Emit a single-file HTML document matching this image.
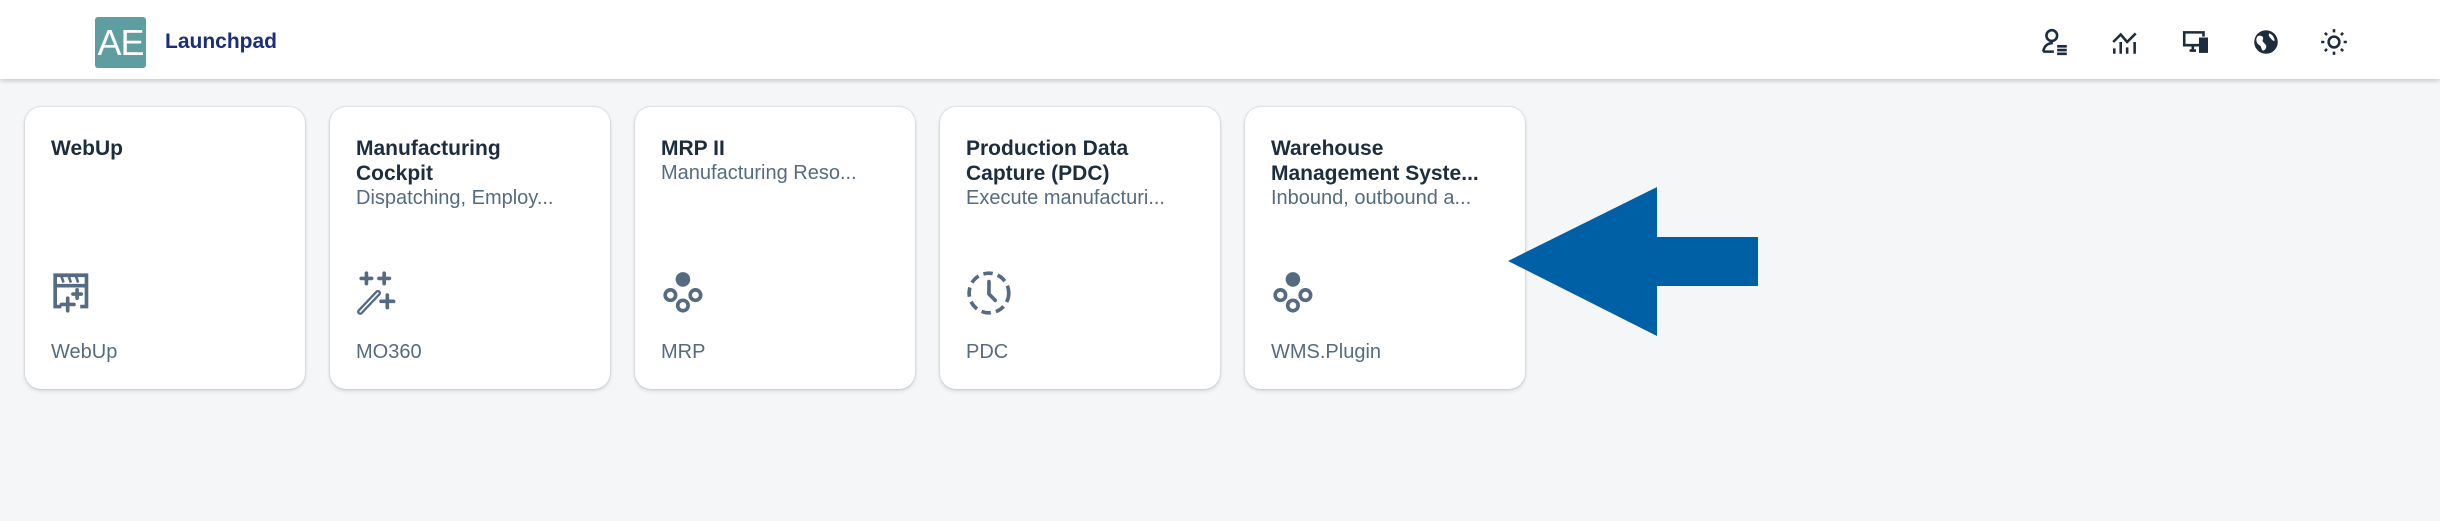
<!DOCTYPE html>
<html><head><meta charset="utf-8"><style>
*{margin:0;padding:0;box-sizing:border-box}
body{width:2440px;height:521px;background:#f5f6f7;font-family:"Liberation Sans",sans-serif;position:relative;overflow:hidden}
.hdr{position:absolute;left:0;top:0;width:2440px;height:79px;background:#fff;box-shadow:0 2px 4px rgba(0,0,0,.18)}
.logo{position:absolute;left:95px;top:17px;width:51px;height:51px;background:#5f9ea0;border-radius:3px;color:#fff;font-size:36px;line-height:51px;text-align:center;letter-spacing:-1px}
.lp{position:absolute;left:165px;top:30px;font-size:21px;font-weight:bold;color:#1a2e7a}
.hi{position:absolute;top:27px;width:30px;height:30px}
.card{position:absolute;top:107px;width:280px;height:282px;background:#fff;border-radius:16px;box-shadow:0 0 2px rgba(0,0,0,.2),0 2px 4px rgba(0,0,0,.12);padding:29px 26px}
.t{font-size:21px;font-weight:bold;color:#1d2d3e;line-height:25px;white-space:nowrap;overflow:hidden;text-overflow:ellipsis}
.s{font-size:20px;color:#556b82;line-height:25px;white-space:nowrap;overflow:hidden;text-overflow:ellipsis}
.ic{position:absolute;left:26px;top:162px;width:48px;height:48px}
.f{position:absolute;left:26px;top:234px;font-size:20px;color:#556b82}
</style></head><body>
<div class="hdr">
<div class="logo">AE</div><div class="lp">Launchpad</div>
<svg class="hi" style="left:2040px" viewBox="0 0 28 28" fill="none" stroke="#1d2d3e" stroke-width="2.4"><circle cx="11" cy="8" r="5"/><path d="M3 23c1-6 5-8 9-8"/><path d="M3 23h10M16 18h9M16 21.5h9M16 25h9"/></svg>
<svg class="hi" style="left:2110px" viewBox="0 0 28 28" fill="none" stroke="#1d2d3e" stroke-width="2.4"><path d="M3 14l7-7 6 7 8-8"/><path d="M4 20v5M10 14v11M16 19v6M23 14v11"/></svg>
<svg class="hi" style="left:2181px" viewBox="0 0 28 28" fill="none" stroke="#1d2d3e" stroke-width="2.4"><path d="M17 17H3V5h18v4"/><path d="M8 22h6M11 17v5"/><rect x="18" y="11" width="6" height="12" fill="#1d2d3e"/></svg>
<svg class="hi" style="left:2251px" viewBox="0 0 28 28"><circle cx="14" cy="14" r="11" fill="#1d2d3e"/><path d="M8 8c3 0 4 2 3 4s2 3 3 5-1 5-3 5c-2-2-1-4-3-5s-3-3-3-5 1-4 3-4zM17 6c3 1 5 4 5 7-2 0-3-2-4-3s-2-2-1-4z" fill="#fff"/></svg>
<svg class="hi" style="left:2319px" viewBox="0 0 28 28" fill="none" stroke="#1d2d3e" stroke-width="2.4"><circle cx="14" cy="14" r="5"/><path d="M14 2v3M14 23v3M2 14h3M23 14h3M5.5 5.5l2 2M20.5 20.5l2 2M5.5 22.5l2-2M20.5 7.5l2-2"/></svg>
</div>

<div class="card" style="left:25px"><div class="t">WebUp</div>
<svg class="ic" viewBox="0 0 46 46" fill="none" stroke="#556b82" stroke-width="3.5"><path d="M4 16V6h30v10M4 16h30M4 16v20h6M34 16v20h-6"/><path d="M10 7l2 6M17 7l2 6M24 7l2 6" stroke-width="2.5"/><path d="M16 28v12M10 34h12M25 20v8M21 24h8" stroke-linecap="round"/></svg>
<div class="f">WebUp</div></div>

<div class="card" style="left:330px"><div class="t">Manufacturing</div><div class="t">Cockpit</div><div class="s">Dispatching, Employ...</div>
<svg class="ic" viewBox="0 0 46 46" fill="none" stroke="#556b82" stroke-width="3.5" stroke-linecap="round"><path d="M10 4v10M5 9h10M27 4v10M22 9h10M30 25v12M24 31h12"/><path d="M4 41l17-18" stroke-width="6"/><path d="M4 41l17-18" stroke="#fff" stroke-width="1.5"/></svg>
<div class="f">MO360</div></div>

<div class="card" style="left:635px"><div class="t">MRP II</div><div class="s">Manufacturing Reso...</div>
<svg class="ic" viewBox="0 0 46 46"><circle cx="21" cy="10" r="7" fill="#556b82"/><g fill="none" stroke="#556b82" stroke-width="3.5"><circle cx="9" cy="25" r="5"/><circle cx="33" cy="25" r="5"/><circle cx="21" cy="35" r="5"/></g></svg>
<div class="f">MRP</div></div>

<div class="card" style="left:940px"><div class="t">Production Data</div><div class="t">Capture (PDC)</div><div class="s">Execute manufacturi...</div>
<svg class="ic" viewBox="0 0 46 46" fill="none" stroke="#556b82" stroke-width="3.5"><circle cx="22" cy="23" r="19" stroke-dasharray="9 5"/><path d="M22 12v12l6 6" stroke-linecap="round"/></svg>
<div class="f">PDC</div></div>

<div class="card" style="left:1245px"><div class="t">Warehouse</div><div class="t">Management Syste...</div><div class="s">Inbound, outbound a...</div>
<svg class="ic" viewBox="0 0 46 46"><circle cx="21" cy="10" r="7" fill="#556b82"/><g fill="none" stroke="#556b82" stroke-width="3.5"><circle cx="9" cy="25" r="5"/><circle cx="33" cy="25" r="5"/><circle cx="21" cy="35" r="5"/></g></svg>
<div class="f">WMS.Plugin</div></div>

<svg style="position:absolute;left:0;top:0" width="2440" height="521"><polygon points="1508,261 1657,187 1657,237 1758,237 1758,286 1657,286 1657,336" fill="#0060a5"/></svg>
</body></html>
